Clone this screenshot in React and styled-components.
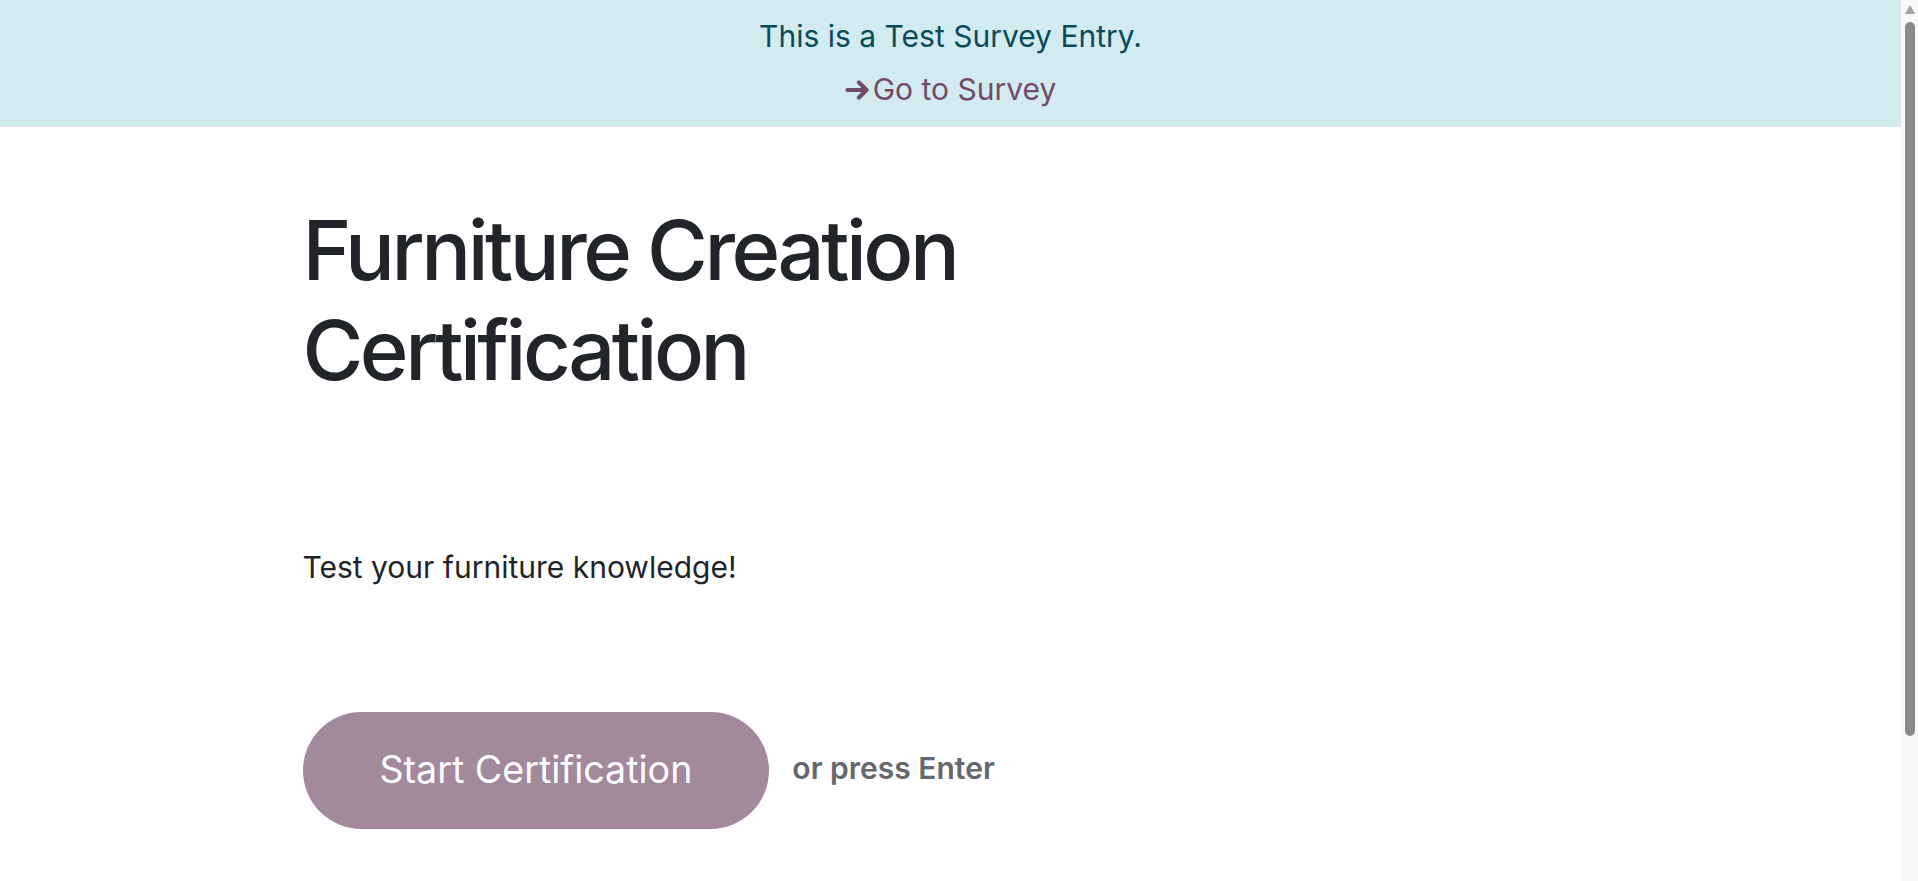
import React from 'react';
import styled, { createGlobalStyle } from 'styled-components';

const GlobalStyle = createGlobalStyle`
  html, body {
    margin: 0;
    padding: 0;
    background: #ffffff;
  }
  body {
    font-family: Inter, "Noto Sans", "Liberation Sans", sans-serif;
    color: #212529;
  }
`;

const Page = styled.div`
  padding-right: 17px;
`;

const Banner = styled.div`
  background: #d1ebf0;
  color: #0b4a59;
  display: flex;
  flex-direction: column;
  align-items: center;
  gap: 8px;
  padding: 14px 0 15px;
  font-size: 30px;
  line-height: 1.5;
`;

const BannerText = styled.p`
  margin: 0;
`;

const SurveyLink = styled.a`
  display: inline-flex;
  align-items: center;
  color: #714b67;
  text-decoration: none;
  cursor: pointer;
`;

const ArrowIcon = styled.svg`
  width: 26px;
  height: 20px;
  margin-right: 2px;
`;

const Container = styled.main`
  max-width: 1320px;
  margin: 0 auto;
  padding: 74px 12px 217px;
  box-sizing: border-box;
`;

const Title = styled.h1`
  margin: 0;
  font-size: 83px;
  font-weight: 500;
  line-height: 1.2;
  letter-spacing: -3.5px;
  max-width: 720px;
`;

const Description = styled.p`
  margin: 145px 0 0;
  font-size: 30px;
  line-height: 1.5;
  color: #212529;
`;

const Actions = styled.div`
  display: flex;
  align-items: center;
  gap: 23px;
  margin-top: 122px;
`;

const StartButton = styled.button`
  font-family: inherit;
  font-size: 37.6px;
  line-height: 1.5;
  color: #ffffff;
  background: #714b67;
  opacity: 0.65;
  border: none;
  border-radius: 60px;
  height: 117px;
  padding: 0 77px;
  cursor: default;
`;

const Hint = styled.span`
  font-size: 30px;
  font-weight: 600;
  color: #65696d;
  padding-bottom: 5px;
`;

/* the browser scrollbar visible at the right edge of the reference */
const Scrollbar = styled.div`
  position: fixed;
  top: 0;
  right: 0;
  width: 17px;
  height: 100vh;
  background: #f9f9f9;
  display: flex;
  flex-direction: column;
  align-items: center;
`;

const ScrollArrow = styled.div`
  margin-top: 5px;
  width: 0;
  height: 0;
  border-left: 5px solid transparent;
  border-right: 5px solid transparent;
  border-bottom: 9px solid #a3a3a3;
`;

const ScrollThumb = styled.div`
  margin-top: 8px;
  width: 10px;
  height: 714px;
  border-radius: 5px;
  background: #8a8a8a;
`;

export default function App() {
  return (
    <Page>
      <GlobalStyle />
      <Banner>
        <BannerText>This is a Test Survey Entry.</BannerText>
        <SurveyLink>
          <ArrowIcon viewBox="0 0 26 20">
            <path
              d="M2.5 10 H21.5 M14 2.5 L21.5 10 L14 17.5"
              fill="none"
              stroke="#714b67"
              strokeWidth="4.2"
              strokeLinecap="round"
              strokeLinejoin="round"
            />
          </ArrowIcon>
          Go to Survey
        </SurveyLink>
      </Banner>
      <Container>
        <Title>Furniture Creation Certification</Title>
        <Description>Test your furniture knowledge!</Description>
        <Actions>
          <StartButton disabled>Start Certification</StartButton>
          <Hint>or press Enter</Hint>
        </Actions>
      </Container>
      <Scrollbar>
        <ScrollArrow />
        <ScrollThumb />
      </Scrollbar>
    </Page>
  );
}
